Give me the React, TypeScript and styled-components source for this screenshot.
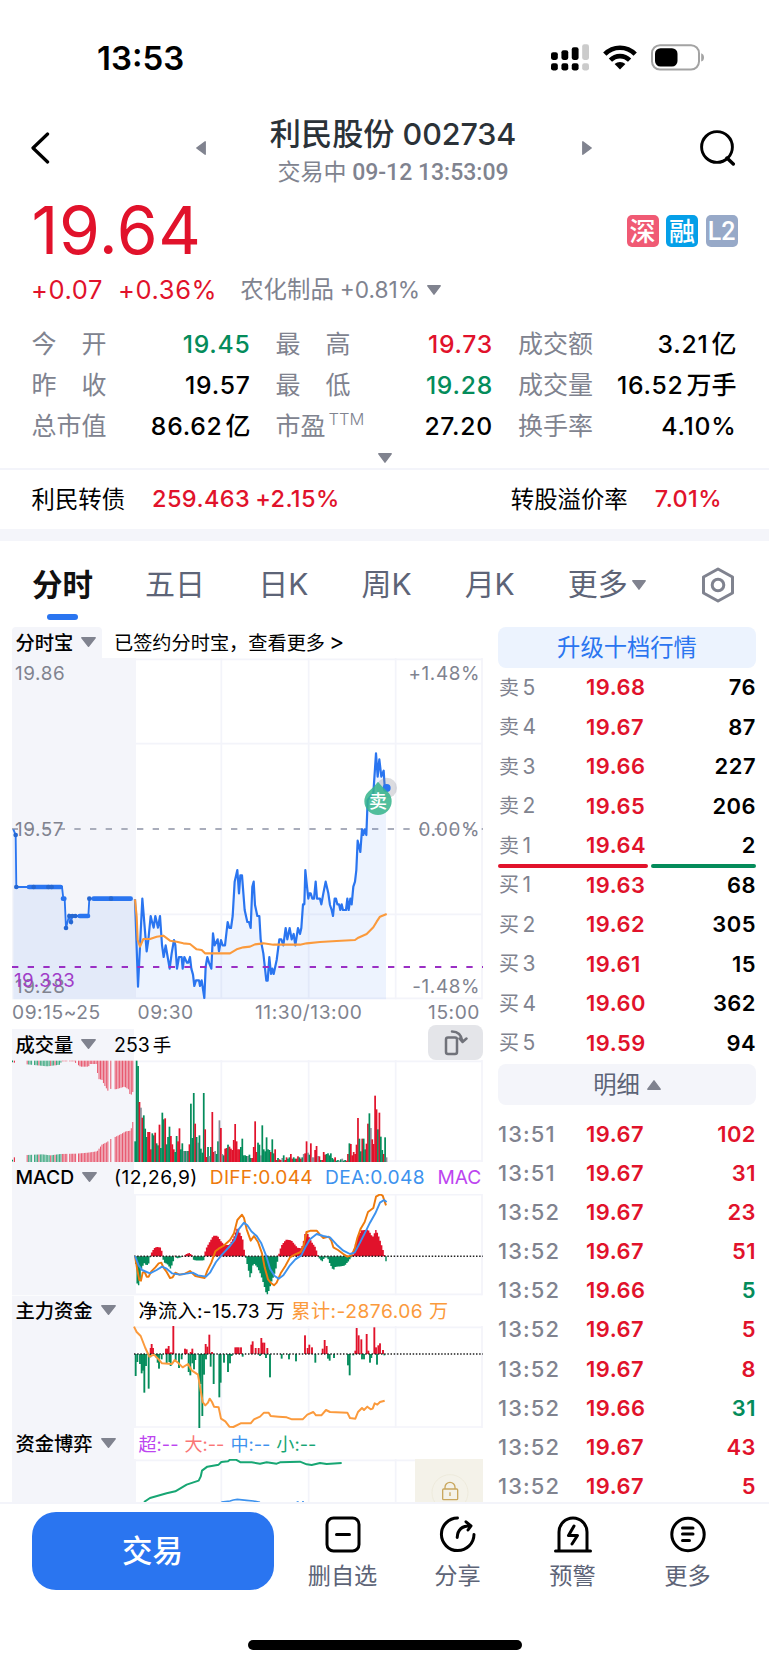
import React from "react";
import styled, { createGlobalStyle } from "styled-components";

const RED = "#e1122b";
const GREEN = "#048c5b";
const BLUE = "#2a75f0";
const GREY = "#80838f";
const SLATE = "#5d6477";
const PANEL = "#f4f5fa";
const GRID = "#f3f4fa";

const Global = createGlobalStyle`
  * { box-sizing: border-box; }
  body { margin: 0; background: #fff; }
`;

const Page = styled.div`
  width: 769px;
  height: 1665px;
  overflow: hidden;
  background: #fff;
  color: #000;
  font-family: Inter, "Noto Sans CJK SC", sans-serif;
  display: flex;
  flex-direction: column;
  white-space: nowrap;
`;

const StatusBar = styled.div`
  height: 110px;
  flex: none;
  padding: 5px 64px 0 97px;
  display: flex;
  align-items: center;
  justify-content: space-between;
`;
const Clock = styled.div`
  font-size: 33px;
  font-weight: 600;
`;
const StatusIcons = styled.div`
  display: flex;
  align-items: center;
  gap: 14px;
`;

const Header = styled.header`
  height: 76px;
  flex: none;
  padding: 0 33px 0 30px;
  display: flex;
  align-items: center;
`;
const TitleGroup = styled.div`
  display: flex;
  align-items: center;
  width: 396px;
  margin-left: 146px;
  margin-right: auto;
  justify-content: space-between;
`;
const TitleBlock = styled.div`
  text-align: center;
  color: #2b3238;
  position: relative;
  left: -1px;
`;
const Title = styled.div`
  height: 48px;
  line-height: 48px;
  font-size: 30.5px;
  font-weight: 500;
  letter-spacing: -0.1px;
  span { font-size: 31.2px; letter-spacing: 0; }
`;
const Subtitle = styled.div`
  height: 28px;
  line-height: 29px;
  font-family: Roboto, "Noto Sans CJK SC", sans-serif;
  font-size: 23px;
  font-weight: 500;
  color: ${GREY};
  span { font-weight: 400; letter-spacing: 0; }
`;

const PriceRow = styled.div`
  height: 89px;
  flex: none;
  padding: 0 31.5px 0 31.5px;
  display: flex;
  align-items: center;
  justify-content: space-between;
`;
const Price = styled.div`
  font-size: 66px;
  font-weight: 400;
  line-height: 78px;
  padding-bottom: 2px;
  letter-spacing: 0.6px;
  color: ${RED};
`;
const Badges = styled.div`
  display: flex;
  gap: 7.5px;
`;
const Badge = styled.div<{ $bg: string; $latin?: boolean }>`
  width: 32px;
  height: 32px;
  border-radius: 5px;
  background: ${(p) => p.$bg};
  color: #fff;
  font-size: ${(p) => (p.$latin ? 25 : 26)}px;
  font-family: ${(p) => (p.$latin ? "Roboto" : '"Noto Sans CJK SC"')}, sans-serif;
  font-weight: 500;
  line-height: ${(p) => (p.$latin ? 34 : 30)}px;
  text-align: center;
`;

const ChangeRow = styled.div`
  height: 30px;
  flex: none;
  padding-left: 31px;
  display: flex;
  align-items: center;
  line-height: 30px;
`;
const Change = styled.span`
  font-size: 25.5px;
  color: ${RED};
  letter-spacing: 0.6px;
  margin-right: 15px;
`;
const Industry = styled.span`
  font-size: 22.7px;
  color: ${GREY};
  margin-left: 8px;
  margin-right: 6.5px;
  letter-spacing: 0;
  span { font-size: 23.4px; letter-spacing: 0; margin-right: 6px; }
`;

const Stats = styled.div`
  flex: none;
  padding: 19px 32px 0 31.5px;
  display: grid;
  grid-template-columns: 219px 217.5px 218.5px;
  column-gap: 25px;
  grid-auto-rows: 41px;
`;
const Stat = styled.div`
  display: flex;
  justify-content: space-between;
  align-items: center;
  line-height: 41px;
`;
const StatLabel = styled.span`
  font-size: 25px;
  color: ${GREY};
  sup { font-size: 16.5px; line-height: 0; vertical-align: 10px; font-weight: 300; margin-left: 3px; }
`;
const StatValue = styled.span<{ $color?: string }>`
  font-size: 24.7px;
  font-weight: 500;
  letter-spacing: 0.75px;
  color: ${(p) => p.$color ?? "#000"};
  display: flex;
  i { font-style: normal; letter-spacing: 0; margin-left: 3px; font-size: 25px; }
`;
const ExpandRow = styled.div`
  height: 21px;
  flex: none;
  display: flex;
  align-items: center;
  justify-content: center;
`;

const BondRow = styled.div`
  height: 61px;
  flex: none;
  border-top: 2px solid ${GRID};
  padding: 0 47px 2px 31.5px;
  display: flex;
  align-items: center;
  font-size: 23.5px;
`;
const BondName = styled.span`
  font-size: 23.4px;
  margin-right: 27px;
  padding-bottom: 2px;
`;
const BondValue = styled.span`
  color: ${RED};
  font-weight: 500;
  letter-spacing: 0.4px;
  margin-right: 5px;
  &:last-child { margin-right: 0; }
`;
const Spacer = styled.div`
  flex: 1;
`;
const Band = styled.div`
  height: 12px;
  flex: none;
  background: ${PANEL};
`;

const Tabs = styled.nav`
  height: 86px;
  flex: none;
  padding: 0 33px 0 32px;
  display: flex;
  justify-content: space-between;
`;
const Tab = styled.div<{ $active?: boolean }>`
  height: 79px;
  padding-top: ${(p) => (p.$active ? 7 : 8)}px;
  font-size: ${(p) => (p.$active ? 30.5 : 30)}px;
  font-weight: ${(p) => (p.$active ? 700 : 400)};
  color: ${(p) => (p.$active ? "#111" : SLATE)};
  line-height: 71px;
  display: flex;
  align-items: center;
  gap: 4px;
  position: relative;
  left: ${(p) => (p.$active ? 0 : -1)}px;
  &::after {
    content: "";
    display: ${(p) => (p.$active ? "block" : "none")};
    position: absolute;
    left: 15px;
    bottom: 0;
    width: 31px;
    height: 6px;
    border-radius: 3px;
    background: ${BLUE};
  }
`;
const TabIcon = styled.div`
  height: 87px;
  display: flex;
  align-items: center;
`;

const Main = styled.main`
  height: 875px;
  flex: none;
  overflow: hidden;
  padding: 0 13px 0 12px;
  display: flex;
  justify-content: space-between;
`;
const Charts = styled.section`
  width: 471px;
  svg { display: block; }
`;
const PanelHead = styled.div<{ $h: number; $split?: boolean }>`
  height: ${(p) => p.$h}px;
  display: flex;
  align-items: center;
  overflow: hidden;
  font-size: 19.2px;
  background: ${(p) =>
    p.$split ? `linear-gradient(to right, ${PANEL} 122.5px, #fff 122.5px)` : "#fff"};
`;
const Pick = styled.div<{ $w: number; $tag?: boolean }>`
  width: ${(p) => p.$w}px;
  height: 100%;
  flex: none;
  padding: 0 0 2px 3.5px;
  display: flex;
  align-items: center;
  gap: 8px;
  font-size: 19.3px;
  font-weight: 500;
  border-radius: 4px 4px 0 0;
  margin-right: ${(p) => (p.$tag ? 12 : 0)}px;
  background: ${(p) => (p.$tag ? PANEL : "transparent")};
`;
const Info = styled.span<{ $color?: string; $gap?: number; $ls?: number; $size?: number }>`
  color: ${(p) => p.$color ?? "#000"};
  margin-right: ${(p) => p.$gap ?? 0}px;
  letter-spacing: ${(p) => p.$ls ?? 0}px;
  font-size: ${(p) => p.$size ?? 19.2}px;
  padding-bottom: 2px;
  b { font-weight: 400; font-size: 23px; line-height: 20px; margin-left: 4px; }
`;
const TimeAxis = styled.div`
  height: 25px;
  padding: 0 3px 1px 0;
  display: grid;
  grid-template-columns: 125.5px 117.5px 1fr auto;
  align-items: center;
  font-size: 19.2px;
  letter-spacing: 0.55px;
  color: ${GREY};
`;
const VolumeHead = styled.div`
  height: 35px;
  display: flex;
  align-items: stretch;
  justify-content: space-between;
`;
const RotateButton = styled.div`
  width: 55px;
  height: 35px;
  border-radius: 8px;
  background: #e4e5e9;
  display: flex;
  align-items: center;
  justify-content: center;
`;
const VolumeLabel = styled.div`
  width: 380px;
  margin-top: 4px;
  display: flex;
  align-items: center;
  font-size: 19.5px;
  background: linear-gradient(to right, ${PANEL} 122.5px, #fff 122.5px);
  i { font-style: normal; font-size: 18.5px; margin-left: 3px; padding-bottom: 2px; }
`;

const Side = styled.aside`
  width: 258px;
`;
const SideButton = styled.div<{ $blue?: boolean }>`
  height: 41px;
  border-radius: 8px;
  padding-bottom: 3px;
  background: ${(p) => (p.$blue ? "#ecf3fe" : PANEL)};
  color: ${(p) => (p.$blue ? BLUE : SLATE)};
  font-size: 23.3px;
  display: flex;
  align-items: center;
  justify-content: center;
  gap: 7px;
  svg { position: relative; top: 2px; }
`;
const Book = styled.div`
  height: 397px;
  margin-top: -0.5px;
  margin-bottom: -0.5px;
`;
const BookRow = styled.div<{ $h: number }>`
  height: ${(p) => p.$h}px;
  display: grid;
  grid-template-columns: 88px 1fr auto;
  align-items: center;
  font-size: 21.9px;
  font-weight: 600;
  line-height: ${(p) => p.$h}px;
`;
const Level = styled.span`
  font-size: 21px;
  font-weight: 400;
  color: ${GREY};
  padding-left: 1px;
  i { font-style: normal; font-size: 20px; margin-right: 3.5px; }
`;
const Time = styled.span`
  font-weight: 500;
  color: ${GREY};
  letter-spacing: 1.1px;
`;
const Quote = styled.span<{ $color?: string }>`
  color: ${(p) => p.$color ?? RED};
  letter-spacing: 0.5px;
`;
const Ratio = styled.div`
  height: 0;
  display: flex;
  gap: 3px;
  position: relative;
  top: -1.5px;
`;
const RatioBar = styled.div<{ $w: number; $color: string }>`
  width: ${(p) => p.$w}px;
  height: 4px;
  border-radius: 2px;
  background: ${(p) => p.$color};
`;
const Trades = styled.div`
  padding-top: 10px;
`;

const BottomBar = styled.footer`
  flex: none;
  height: 163px;
  border-top: 2px solid ${GRID};
  background: #fff;
  padding: 8px 0 0 31.5px;
  display: flex;
  flex-direction: column;
`;
const Actions = styled.div`
  height: 127.5px;
  display: flex;
  align-items: flex-start;
`;
const TradeButton = styled.div`
  width: 242px;
  height: 78px;
  flex: none;
  border-radius: 24px;
  background: ${BLUE};
  color: #fff;
  font-size: 30.5px;
  font-weight: 500;
  line-height: 78px;
  text-align: center;
  margin-right: 11.5px;
`;
const Action = styled.div`
  width: 115px;
  flex: none;
  display: flex;
  flex-direction: column;
  align-items: center;
  color: ${SLATE};
  font-size: 23.2px;
  line-height: 34px;
  svg { margin: 3px 0 6px; }
`;
const HomeIndicator = styled.div`
  width: 274px;
  height: 10px;
  border-radius: 5px;
  background: #000;
  margin-left: 216px;
`;

type TriProps = { dir?: "down" | "up" | "left" | "right"; w?: number; h?: number };
const Tri = ({ dir = "down", w = 14, h = 9 }: TriProps) => {
  const d = {
    down: `M0.8 0.8H${w - 0.8}L${w / 2} ${h - 0.8}Z`,
    up: `M0.8 ${h - 0.8}H${w - 0.8}L${w / 2} 0.8Z`,
    left: `M${w - 0.8} 0.8V${h - 0.8}L0.8 ${h / 2}Z`,
    right: `M0.8 0.8V${h - 0.8}L${w - 0.8} ${h / 2}Z`,
  }[dir];
  return (
    <svg width={w} height={h} viewBox={`0 0 ${w} ${h}`}>
      <path d={d} fill={GREY} stroke={GREY} strokeWidth="1.4" strokeLinejoin="round" />
    </svg>
  );
};

const SignalIcon = () => (
  <svg width="38" height="27" viewBox="0 0 39 27">
    {[0, 10.7, 21.3, 32].map((x, i) => (
      <g key={x} fill={i === 3 ? "#cbcbcb" : "#000"}>
        <rect x={x} y={[8, 6, 3, 0][i]} width="7" height={[8, 10, 13, 16][i]} rx="2.2" />
        <rect x={x} y="19.5" width="7" height="7.3" rx="2.2" />
      </g>
    ))}
  </svg>
);
const WifiIcon = () => (
  <svg width="34" height="25" viewBox="0 0 34 25">
    <g fill="none" stroke="#000" strokeWidth="4.6">
      <path d="M1.8 9.2C10.2 0.6 23.8 0.6 32.2 9.2" />
      <path d="M7.4 15.2C12.8 9.8 21.2 9.8 26.6 15.2" />
    </g>
    <path d="M11.6 19C14.6 16.2 19.4 16.2 22.4 19L17 24.6Z" fill="#000" />
  </svg>
);
const BatteryIcon = () => (
  <svg width="54" height="27" viewBox="0 0 54 27">
    <rect x="1" y="1.2" width="47" height="24.4" rx="8" fill="none" stroke="#a3a3a3" strokeWidth="2" />
    <rect x="4" y="4.2" width="22.5" height="18.4" rx="5.5" fill="#000" />
    <path d="M50.2 9.2Q53 10.2 53 13.4Q53 16.6 50.2 17.6Z" fill="#a3a3a3" />
  </svg>
);

const pts = (s: string) => s.trim().split(/\s+/).map((p) => p.split(",").map(Number));

const GridLines = ({ top, bottom, x0 = 0 }: { top: number; bottom: number; x0?: number }) => (
  <g>
    <rect x={36 + x0} y={top} width="372" height={bottom - top} fill={PANEL} />
    <g stroke={GRID} strokeWidth="5">
      <path d={`M${408 + x0} ${top + 4}H${1447 + x0}M${408 + x0} ${bottom - 3}H${1447 + x0}`} />
      <path d={`M${664 + x0} ${top}V${bottom}M${926 + x0} ${top}V${bottom}M${1187 + x0} ${top}V${bottom}M${1446 + x0} ${top}V${bottom}`} />
    </g>
  </g>
);

const AUCTION =
  "40,628 47,645 49,801 186,801 190,836 194,836 198,924 207,888 213,906 217,888 265,888 268,836 396,836";
const PRICE =
  "405,838 414,1100 427,836 440,994 445,960 452,888 456,905 461,923 466,888 474,923 480,888 486,975 491,1011 497,976 503,1011 509,1046 515,1000 522,960 526,975 531,1046 537,1011 545,1011 548,1046 553,1011 561,1028 565,1028 570,1011 574,1046 579,1064 583,1098 588,1081 597,1081 600,1098 605,1081 613,1134 617,1040 622,1011 627,1028 634,1046 639,940 644,976 653,958 657,994 663,960 668,976 675,976 683,906 688,924 693,924 698,888 704,785 712,750 717,820 721,766 726,766 734,870 742,906 747,906 752,924 757,800 761,785 765,855 772,888 778,888 782,958 790,1000 799,1082 803,1082 808,1011 813,1062 817,1046 821,1062 830,1020 838,958 844,958 850,976 857,924 862,958 869,924 875,958 881,942 886,976 894,924 900,942 904,924 909,853 913,853 916,750 921,800 925,836 928,820 932,820 937,836 942,836 947,785 951,836 960,836 964,853 970,820 977,785 985,820 990,855 995,870 999,888 1004,836 1008,836 1012,853 1017,853 1021,870 1025,853 1029,870 1038,870 1042,836 1046,870 1051,836 1055,853 1060,800 1065,785 1069,750 1073,662 1081,696 1086,628 1090,645 1094,628 1099,645 1103,540 1120,520 1128,400 1133,470 1138,418 1144,470 1151,452 1154,500 1160,504";
const AVERAGE =
  "405,838 410,890 413,960 420,980 430,957 450,957 470,950 490,947 510,962 530,965 550,970 570,972 590,988 605,990 615,1000 690,1000 710,988 730,982 750,980 765,973 790,970 820,974 900,974 920,970 960,966 1010,963 1065,960 1075,953 1100,942 1120,922 1130,905 1140,890 1160,882";

const TrendChart = () => (
  <svg width="471" height="342" viewBox="36 114 1413 1026">
    <GridLines top={114} bottom={1138} />
    <path d="M408 371H1446M408 883H1446" stroke={GRID} strokeWidth="5" />
    <path d="M36 627H1449" stroke="#a9adbb" strokeWidth="5.5" strokeDasharray="19 28" strokeDashoffset="1" />
    <polygon points={`${AUCTION} 405,838 405,1138 40,1138`} fill={BLUE} opacity="0.08" />
    <polygon points={`${PRICE.replace("1160,504", "1158,504")} 1158,1138 405,1138`} fill={BLUE} opacity="0.085" />
    <g fill={GREY} fontFamily="Inter" fontSize="56.5" letterSpacing="1.8">
      <text x="45" y="181">19.86</text>
      <text x="45" y="647">19.57</text>
      <text x="1440" y="181" textAnchor="end">+1.48%</text>
      <text x="1440" y="647" textAnchor="end">0.00%</text>
      <text x="1440" y="1120" textAnchor="end">-1.48%</text>
      <text x="45" y="1118">19.28</text>
    </g>
    <polyline points={AUCTION} fill="none" stroke={BLUE} strokeWidth="5.5" />
    <g stroke={BLUE} strokeWidth="14" strokeLinecap="round">
      <path d="M87 801H182M189 836H193M239 888H264M281 836H392" />
    </g>
    <g fill="#2567d2">
      {pts("47,645 49,801 101,801 145,801 155,801 198,924 208,888 213,906 217,888 226,888 268,836 333,836").map(([x, y]) => (
        <circle key={`${x}-${y}`} cx={x} cy={y} r="7" />
      ))}
    </g>
    <polyline points={PRICE} fill="none" stroke={BLUE} strokeWidth="6.6" strokeLinejoin="round" />
    <polyline points={AVERAGE} fill="none" stroke="#fb9a3c" strokeWidth="6.3" strokeLinejoin="round" />
    <path d="M36 1041H1449" stroke="#9a2fc4" strokeWidth="6" strokeDasharray="19 28" />
    <text x="42" y="1102" fill="#a03cc8" fontFamily="Inter" fontSize="56" letterSpacing="1.6">19.333</text>
    <circle cx="1160" cy="504" r="31" fill="#80838f" opacity="0.28" />
    <circle cx="1160" cy="504" r="12" fill={BLUE} />
    <path d="M1134 485Q1148 503 1163 515A41 41 0 1 1 1105 515Q1120 503 1134 485Z" fill="#35b58c" opacity="0.86" />
    <text x="1134" y="563" fill="#fff" fontFamily="Noto Sans CJK SC" fontWeight="500" fontSize="54" textAnchor="middle">
      卖
    </text>
  </svg>
);

const VOLUME =
  "62g 304g 288g 180r 163n 133r 140g 100g 75g 90r 90r 38r 86g 80g 88r 56g 50g 112r 42g 148g 128g 131r 53g 75g 106g 78r 53r 38r 30g 78g 62r 101r 38g 56g 33n 33g 33n 33g 53r 175g 72g 207g 115r 75g 58n 80g 40g 28g 207g 98r 15r 45g 18n 45g 150r 30r 33n 24g 62g 125n 102r 24n 20g 40r 42r 52g 46r 40r 36r 66r 114r 62r 38r 38r 45g 70g 20g 20g 18g 18n 22g 12g 12r 45r 122r 30r 58g 52g 20n 110g 38g 32g 74g 38g 36g 30r 68g 26g 38r 6r 12g 8r 6r 12n 20g 6r 14r 10g 14g 24r 10r 14g 10g 10r 17r 14g 10r 14g 24n 26r 62r 28n 22g 56r 14n 14n 36r 48r 18n 17r 6g 6r 30r 22r 24g 26g 20g 26g 12g 8g 14r 4g 6g 4n 8g 10n 4g 6g 4r 24r 56g 54r 20r 30r 24r 52r 132r 70g 32g 70r 70g 38g 55r 115r 146g 102n 68r 54r 199r 158r 98g 148r 76g 36g 24r 74g 14n".split(" ");
const VOLUME_STEP = (1157 - 403) / (VOLUME.length - 1);
const TONES: Record<string, string> = { r: RED, g: GREEN, n: "#8a8c97" };

const lerp = (list: number[][], x: number) => {
  if (x <= list[0][0]) return list[0][1];
  for (let i = 1; i < list.length; i++) {
    const [x0, y0] = list[i - 1];
    const [x1, y1] = list[i];
    if (x <= x1) return y0 + ((y1 - y0) * (x - x0)) / (x1 - x0);
  }
  return list[list.length - 1][1];
};

const UNMATCHED = pts(
  "79,11 110,14 140,17 180,12 182,2 222,2 226,8 240,18 264,18 268,10 290,10 292,55 304,57 312,74 322,90 332,84 346,86 372,78 384,86 390,107 396,94"
);
const MATCHED = pts(
  "79,21 125,23 150,20 180,24 228,25 262,28 290,32 304,52 320,60 332,70 346,76 362,84 376,92 391,94 396,120"
);

const VolumeChart = () => {
  const slots = Array.from({ length: 73 }, (_, i) => 80 + i * 4.4).filter(
    (x) => !(x > 94 && x < 101) && !(x > 201 && x < 206) && !(x > 226 && x < 231) && !(x > 323 && x < 330) && !(x > 334 && x < 341)
  );
  return (
    <svg width="471" height="102" viewBox="36 120 1413 306">
      <GridLines top={120} bottom={426} />
      {slots.map((x) => {
        const color = x < 182 && Math.round(x) % 7 !== 3 ? "#3fa881" : "#e8586e";
        const up = lerp(UNMATCHED, x);
        const low = lerp(MATCHED, x);
        return (
          <g key={x} fill={color}>
            <rect x={x} y="122" width="3.1" height={up} />
            <rect x={x} y={426 - low} width="3.1" height={low} />
          </g>
        );
      })}
      <path d="M34 124H39M34 422H39" stroke={GREEN} strokeWidth="5" />
      <path d="M43 122V128M43 412V426" stroke={RED} strokeWidth="3" />
      {VOLUME.map((t, i) => {
        const h = parseInt(t, 10);
        return (
          <rect key={i} x={403 + i * VOLUME_STEP} y={426 - h} width="5.2" height={h} fill={TONES[t.slice(-1)]} />
        );
      })}
    </svg>
  );
};

const HIST =
  "16,-10 22,-90 28,-85 34,-40 42,-20 50,-28 56,-22 60,-4 64,10 72,24 80,28 94,26 98,-6 102,-18 112,-24 122,-38 130,-14 134,2 140,-6 150,-4 158,0 164,3 170,8 178,10 186,4 190,-10 200,-13 222,-12 226,20 236,38 250,62 262,62 274,44 284,34 298,34 310,55 322,86 330,70 340,46 344,4 348,-8 354,-36 361,-68 370,-20 380,-30 390,-50 400,-80 410,-116 414,-112 424,-78 436,-46 444,-8 448,16 456,36 468,50 484,48 494,36 502,26 514,24 520,44 527,78 534,66 544,44 556,28 562,10 566,-4 576,-16 584,-4 592,-3 600,-24 610,-42 616,-32 644,-28 656,-14 668,4 674,30 684,60 694,78 714,80 728,58 738,80 746,60 754,36 762,10 766,-6 770,-26";
const HIST_POINTS = pts(HIST);
const DIFF =
  "15,198 22,240 28,270 33,272 38,248 44,246 50,260 56,260 64,244 76,232 86,220 94,218 100,232 110,246 120,264 128,262 136,248 148,254 162,252 180,243 196,258 224,264 232,242 244,218 256,184 266,176 280,168 300,150 312,130 322,90 336,74 342,84 350,118 362,152 372,138 384,156 396,190 404,232 414,268 424,280 432,286 440,278 452,250 466,228 480,202 494,194 512,186 520,170 530,126 542,122 560,122 570,134 580,144 596,140 604,152 610,172 624,180 640,192 652,200 664,196 674,176 682,144 692,116 704,96 714,66 730,54 738,20 750,13 758,17 768,46";
const DEA =
  "15,198 26,226 36,240 60,250 80,240 96,230 110,236 126,250 150,254 188,248 204,256 228,260 240,248 258,216 276,194 300,168 314,150 326,118 342,98 352,106 364,124 380,138 394,160 408,196 420,236 434,258 446,266 460,256 480,226 496,208 514,196 526,172 540,148 560,132 580,138 600,142 620,164 640,182 660,192 674,188 690,158 704,130 720,98 736,70 750,38 762,30 770,36";

/* One stepped outline per sign, so that neighbouring bars join without seams. */
const stepPath = (sign: 1 | -1) => {
  let d = "M15 199";
  for (let i = 0; i < 174; i++) {
    const x = 15 + i * 4.34;
    const v = lerp(HIST_POINTS, x + 2);
    const y = v * sign > 0 ? 199 - v : 199;
    d += `V${y.toFixed(1)}H${(x + 4.34).toFixed(2)}`;
  }
  return `${d}V199Z`;
};

const MacdChart = () => (
  <svg width="471" height="102" viewBox="-354 12 1413 306">
    <GridLines top={10} bottom={316} x0={-390} />
    <path d={stepPath(1)} fill={RED} />
    <path d={stepPath(-1)} fill={GREEN} />
    <path d="M12 199H1059" stroke="#222" strokeWidth="4.5" strokeDasharray="4.5 5" />
    <polyline points={DIFF} fill="none" stroke="#ee7a0c" strokeWidth="5.8" strokeLinejoin="round" />
    <polyline points={DEA} fill="none" stroke="#3d92ee" strokeWidth="5.8" strokeLinejoin="round" />
  </svg>
);

const INFLOW = pts(
  "452,18 455,30 459,18 498,16 502,16 506,24 512,5 516,4 520,84 555,16 560,14 572,6 577,16 617,30 622,22 628,58 636,6 706,20 711,20 716,20 723,20 754,28 758,38 767,18 776,18 784,48 788,34 793,34 802,18 915,56 923,18 928,28 936,20 968,16 974,42 980,24 1066,10 1070,78 1076,56 1084,44 1100,60 1105,10 1123,80 1128,20 1135,26 1140,32 1149,12"
);
const OUTFLOW = pts(
  "407,66 412,24 420,30 425,58 429,50 433,116 438,36 446,104 451,10 468,10 473,26 477,44 485,16 500,30 508,24 512,36 527,18 537,42 545,16 566,54 571,64 577,28 582,46 586,18 598,222 602,90 607,186 612,62 618,16 632,38 641,90 658,130 662,86 672,26 684,54 690,28 695,6 728,8 780,6 798,12 810,70 845,14 867,16 888,22 946,26 984,14 989,20 1002,12 1044,34 1049,64 1060,4 1086,16 1092,16 1110,26 1114,12 1131,32 1153,4"
);
const CUMULATIVE =
  "402,140 410,156 422,168 436,204 448,230 462,224 476,238 486,250 516,252 524,240 536,250 548,262 564,252 576,272 594,284 600,320 608,366 616,376 624,368 629,356 636,366 642,380 656,382 663,416 676,424 688,440 700,441 722,430 752,430 762,418 780,410 792,398 806,398 812,408 836,410 860,412 876,418 908,418 922,404 940,396 948,406 964,406 978,390 990,396 1042,398 1050,414 1066,416 1074,396 1086,384 1092,390 1102,380 1112,388 1118,386 1124,370 1132,374 1140,366 1154,362";

const FundsChart = () => (
  <svg width="471" height="102" viewBox="36 138 1413 306">
    <GridLines top={138} bottom={444} />
    {INFLOW.map(([x, v]) => (
      <rect key={x} x={x - 2.8} y={222 - v} width="5.6" height={v} fill={RED} />
    ))}
    {OUTFLOW.map(([x, v]) => (
      <rect key={x} x={x - 2.8} y="222" width="5.6" height={v} fill={GREEN} />
    ))}
    <path d="M402 222H1449" stroke="#222" strokeWidth="4.5" strokeDasharray="4.5 5" />
    <polyline points={CUMULATIVE} fill="none" stroke="#fb9a3c" strokeWidth="6" strokeLinejoin="round" />
  </svg>
);

const GameChart = () => (
  <svg width="471" height="43" viewBox="36 537 1413 129">
    <GridLines top={537} bottom={700} />
    <polyline
      points="432,666 450,654 500,640 526,634 560,614 596,602 602,590 606,572 622,560 656,554 664,546 684,544 690,539 708,539 722,547 755,547 780,551 800,547 830,551 840,547 900,545 920,553 935,555 960,549 980,552 1025,549"
      fill="none"
      stroke="#17a673"
      strokeWidth="6"
      strokeLinejoin="round"
    />
    <polyline points="664,666 690,663 700,660 712,658 740,661 760,663 780,667" fill="none" stroke="#3d92ee" strokeWidth="5" />
    <path d="M890 665H896M906 665H912" stroke="#3d92ee" strokeWidth="3" />
    <rect x="1245" y="537" width="204" height="129" fill="#f4f2e9" />
    <circle cx="1350" cy="638" r="54" fill="none" stroke="#ece8d9" strokeWidth="2.5" />
    <g fill="none" stroke="#c9a75e" strokeWidth="4">
      <rect x="1328" y="627" width="45" height="32" rx="3" />
      <path d="M1335 627V622A15 15 0 0 1 1365 622V627M1350 637V648" />
    </g>
  </svg>
);

const STATS: [React.ReactNode, string, string?, string?][] = [
  ["今　开", "19.45", "", GREEN],
  ["最　高", "19.73", "", RED],
  ["成交额", "3.21", "亿"],
  ["昨　收", "19.57"],
  ["最　低", "19.28", "", GREEN],
  ["成交量", "16.52", "万手"],
  ["总市值", "86.62", "亿"],
  [<>市盈<sup>TTM</sup></>, "27.20"],
  ["换手率", "4.10%"],
];
const SELLS = [["5", "19.68", "76"], ["4", "19.67", "87"], ["3", "19.66", "227"], ["2", "19.65", "206"], ["1", "19.64", "2"]];
const BUYS = [["1", "19.63", "68"], ["2", "19.62", "305"], ["3", "19.61", "15"], ["4", "19.60", "362"], ["5", "19.59", "94"]];
const TRADES: [string, string, string, boolean?][] = [
  ["13:51", "19.67", "102"],
  ["13:51", "19.67", "31"],
  ["13:52", "19.67", "23"],
  ["13:52", "19.67", "51"],
  ["13:52", "19.66", "5", true],
  ["13:52", "19.67", "5"],
  ["13:52", "19.67", "8"],
  ["13:52", "19.66", "31", true],
  ["13:52", "19.67", "43"],
  ["13:52", "19.67", "5"],
];

const BookSide = ({ name, rows }: { name: string; rows: string[][] }) => (
  <>
    {rows.map(([n, price, qty]) => (
      <BookRow key={n} $h={39.5}>
        <Level><i>{name}</i>{n}</Level>
        <Quote>{price}</Quote>
        <Quote $color="#000">{qty}</Quote>
      </BookRow>
    ))}
  </>
);

export default function App() {
  return (
    <Page>
      <Global />
      <StatusBar>
        <Clock>13:53</Clock>
        <StatusIcons>
          <SignalIcon />
          <WifiIcon />
          <BatteryIcon />
        </StatusIcons>
      </StatusBar>

      <Header>
        <svg width="20" height="32" viewBox="0 0 20 32">
          <path d="M17.6 2L3 16L17.6 30" fill="none" stroke="#000" strokeWidth="3.2" strokeLinecap="round" strokeLinejoin="round" />
        </svg>
        <TitleGroup>
          <Tri dir="left" w={10} h={14} />
          <TitleBlock>
            <Title><span>利民股份</span> 002734</Title>
            <Subtitle><span>交易中</span> 09-12 13:53:09</Subtitle>
          </TitleBlock>
          <Tri dir="right" w={10} h={14} />
        </TitleGroup>
        <svg width="36" height="36" viewBox="0 0 36 36">
          <circle cx="17" cy="17" r="15.4" fill="none" stroke="#000" strokeWidth="2.9" />
          <path d="M27 28L33.3 34" stroke="#000" strokeWidth="3.4" strokeLinecap="round" />
        </svg>
      </Header>

      <PriceRow>
        <Price>19.64</Price>
        <Badges>
          <Badge $bg="#f05a74">深</Badge>
          <Badge $bg="#059fe8">融</Badge>
          <Badge $bg="#97a9c8" $latin>L2</Badge>
        </Badges>
      </PriceRow>
      <ChangeRow>
        <Change>+0.07</Change>
        <Change>+0.36%</Change>
        <Industry><span>农化制品</span>+0.81%</Industry>
        <Tri w={14} h={10} />
      </ChangeRow>

      <Stats>
        {STATS.map(([label, value, unit, color], i) => (
          <Stat key={i}>
            <StatLabel>{label}</StatLabel>
            <StatValue $color={color || undefined}>{value}{unit ? <i>{unit}</i> : null}</StatValue>
          </Stat>
        ))}
      </Stats>
      <ExpandRow><Tri w={14} h={10} /></ExpandRow>

      <BondRow>
        <BondName>利民转债</BondName>
        <BondValue>259.463</BondValue>
        <BondValue>+2.15%</BondValue>
        <Spacer />
        <BondName>转股溢价率</BondName>
        <BondValue>7.01%</BondValue>
      </BondRow>
      <Band />

      <Tabs>
        <Tab $active>分时</Tab>
        <Tab>五日</Tab>
        <Tab>日K</Tab>
        <Tab>周K</Tab>
        <Tab>月K</Tab>
        <Tab>更多<Tri w={14} h={10} /></Tab>
        <TabIcon>
          <svg width="36" height="36" viewBox="0 0 36 36" fill="none" stroke={GREY} strokeWidth="3" strokeLinejoin="round">
            <path d="M18 2L32.5 10V26L18 34L3.5 26V10Z" />
            <circle cx="18" cy="18" r="5.8" />
          </svg>
        </TabIcon>
      </Tabs>

      <Main>
        <Charts>
          <PanelHead $h={31}>
            <Pick $w={90} $tag>分时宝<Tri w={15} h={10} /></Pick>
            <Info>已签约分时宝，查看更多<b>&gt;</b></Info>
          </PanelHead>
          <TrendChart />
          <TimeAxis>
            <span>09:15~25</span>
            <span>09:30</span>
            <span>11:30/13:00</span>
            <span>15:00</span>
          </TimeAxis>
          <VolumeHead>
            <VolumeLabel>
              <Pick $w={102}>成交量<Tri w={15} h={10} /></Pick>
              253<i>手</i>
            </VolumeLabel>
            <RotateButton>
              <svg width="24" height="26" viewBox="0 0 24 26" fill="none" stroke="#70727a" strokeWidth="2.5" strokeLinecap="round" strokeLinejoin="round">
                <rect x="2" y="7.5" width="11" height="16.5" rx="2" />
                <path d="M8 1.5C13.5 1.5 17.5 5 18.5 11.5M15.5 8.5L18.5 12L22.5 8.5" />
              </svg>
            </RotateButton>
          </VolumeHead>
          <VolumeChart />
          <PanelHead $h={32} $split>
            <Pick $w={102}>MACD<Tri w={15} h={10} /></Pick>
            <Info $gap={12} $ls={0.5}>(12,26,9)</Info>
            <Info $color="#ee7a0c" $gap={12} $ls={0.25}>DIFF:0.044</Info>
            <Info $color="#3d92ee" $gap={12.5} $ls={0.3}>DEA:0.048</Info>
            <Info $color="#bd45f0">MAC</Info>
          </PanelHead>
          <MacdChart />
          <PanelHead $h={30} $split>
            <Pick $w={126.5}>主力资金<Tri w={15} h={10} /></Pick>
            <Info $gap={6} $ls={0.3}>净流入:-15.73 万</Info>
            <Info $color="#fb9a3c" $ls={0.5}>累计:-2876.06 万</Info>
          </PanelHead>
          <FundsChart />
          <PanelHead $h={31} $split>
            <Pick $w={126.5}>资金博弈<Tri w={15} h={10} /></Pick>
            <Info $color="#bd45f0" $gap={6} $size={18.1}>超:--</Info>
            <Info $color="#fa7575" $gap={6} $size={18.1}>大:--</Info>
            <Info $color="#3d92ee" $gap={6} $size={18.1}>中:--</Info>
            <Info $color="#17a673" $size={18.1}>小:--</Info>
          </PanelHead>
          <GameChart />
        </Charts>

        <Side>
          <SideButton $blue>升级十档行情</SideButton>
          <Book>
            <BookSide name="卖" rows={SELLS} />
            <Ratio>
              <RatioBar $w={149.5} $color={RED} />
              <RatioBar $w={105.5} $color={GREEN} />
            </Ratio>
            <BookSide name="买" rows={BUYS} />
          </Book>
          <SideButton>明细<Tri dir="up" w={14} h={10} /></SideButton>
          <Trades>
            {TRADES.map(([time, price, qty, sell], i) => (
              <BookRow key={i} $h={39.1}>
                <Time>{time}</Time>
                <Quote>{price}</Quote>
                <Quote $color={sell ? GREEN : RED}>{qty}</Quote>
              </BookRow>
            ))}
          </Trades>
        </Side>
      </Main>

      <BottomBar>
        <Actions>
          <TradeButton>交易</TradeButton>
          <Action>
            <svg width="38" height="38" viewBox="0 0 38 38" fill="none" stroke="#000" strokeWidth="3" strokeLinecap="round">
              <rect x="3" y="3" width="32" height="33" rx="6.5" />
              <path d="M12.5 19.5H25.5" />
            </svg>
            删自选
          </Action>
          <Action>
            <svg width="38" height="38" viewBox="0 0 38 38" fill="none" stroke="#000" strokeWidth="3" strokeLinecap="round" strokeLinejoin="round">
              <path d="M18.5 3A16.3 16.3 0 1 0 35 19.5" />
              <path d="M18.2 22.5C18.6 14.5 23 10.8 31.5 10.8M27 6.8L32 10.8L29 15" />
            </svg>
            分享
          </Action>
          <Action>
            <svg width="40" height="38" viewBox="0 0 40 38" fill="none" stroke="#000" strokeWidth="3" strokeLinecap="round" strokeLinejoin="round">
              <path d="M2.5 36H37.5M6 36V17A14 14 0 0 1 34 17V36" />
              <path d="M21 11L15.5 20.5H24.5L19 29" />
            </svg>
            预警
          </Action>
          <Action>
            <svg width="38" height="38" viewBox="0 0 38 38" fill="none" stroke="#000" strokeWidth="3" strokeLinecap="round">
              <circle cx="19" cy="19.5" r="16.2" />
              <path d="M13.5 13H24M13.5 19H24M13.5 25.5H20.5" />
            </svg>
            更多
          </Action>
        </Actions>
        <HomeIndicator />
      </BottomBar>
    </Page>
  );
}
